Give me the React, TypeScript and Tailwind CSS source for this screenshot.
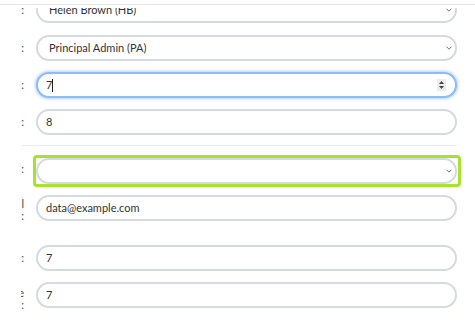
import React from "react";

const font = { fontFamily: "Lato, 'Open Sans', sans-serif" };

function Chevron() {
  return (
    <svg width="6" height="4" viewBox="0 0 6 4" className="shrink-0">
      <polyline points="0.5,0.7 3,3.2 5.5,0.7" fill="none" stroke="#6b7280" strokeWidth="1" />
    </svg>
  );
}

// Label column is clipped on the left; only its tail is visible
function Label({ lines, pt }: { lines: string[]; pt?: string }) {
  return (
    <div
      className={
        "w-[3px] h-[26px] shrink-0 flex justify-end overflow-x-clip text-[11px] leading-[12px] text-[#3f4652] " +
        (pt ?? "items-center")
      }
    >
      <span className="shrink-0 whitespace-nowrap text-right">
        {lines.map((l, i) => (
          <React.Fragment key={i}>
            {i > 0 && <br />}
            {l}
          </React.Fragment>
        ))}
      </span>
    </div>
  );
}

function Field({
  value,
  select,
  focus,
}: {
  value?: string;
  select?: boolean;
  focus?: boolean;
}) {
  return (
    <div
      className={
        "flex-1 h-[26px] rounded-full border-2 bg-white flex items-center text-[11px] text-[#333] " +
        (select ? "pl-[11px] pr-[3px] " : "pl-[8px] pr-[9px] ") +
        (focus
          ? "border-[#8dbdf6] shadow-[0_0_3px_1px_rgba(120,170,240,0.55)]"
          : "border-[#d5dae0]")
      }
    >
      <span className="flex-1 truncate">
        {value}
        {focus && <span className="inline-block w-[1px] h-[13px] bg-[#222] align-[-3px]" />}
      </span>
      {select && <Chevron />}
      {focus && (
        <div className="w-[9px] h-[12px] bg-[#ededed] flex flex-col items-center justify-center gap-[2px]">
          <svg width="5" height="3" viewBox="0 0 5 3">
            <polygon points="0,3 2.5,0 5,3" fill="#444" />
          </svg>
          <svg width="5" height="3" viewBox="0 0 5 3">
            <polygon points="0,0 5,0 2.5,3" fill="#444" />
          </svg>
        </div>
      )}
    </div>
  );
}

export default function App() {
  return (
    <div className="relative h-[335px] w-[475px] overflow-hidden bg-white" style={font}>
      {/* sticky header edge over the scrolled form */}
      <div className="absolute top-0 left-0 right-0 h-[8px] bg-white z-10 pt-[4px]">
        <div className="h-px bg-[#e4e6e9]" />
      </div>

      <div className="flex flex-col pl-[21px] pr-[18px] mt-[-3px]">
        <div className="flex items-start">
          <Label lines={[":"]} />
          <div className="ml-[12px] flex-1 flex">
            <Field value="Helen Brown (HB)" select />
          </div>
        </div>

        <div className="flex items-start mt-[12px]">
          <Label lines={[":"]} />
          <div className="ml-[12px] flex-1 flex">
            <Field value="Principal Admin (PA)" select />
          </div>
        </div>

        <div className="flex items-start mt-[11px]">
          <Label lines={[":"]} />
          <div className="ml-[12px] flex-1 flex">
            <Field value="7" focus />
          </div>
        </div>

        <div className="flex items-start mt-[11px]">
          <Label lines={[":"]} />
          <div className="ml-[12px] flex-1 flex">
            <Field value="8" />
          </div>
        </div>

        <div className="ml-[1px] mt-[10px] h-px bg-[#e8eaed]" />

        <div className="flex items-start mt-[9px]">
          <div className="mt-[1px]">
            <Label lines={[":"]} />
          </div>
          <div className="ml-[9px] mr-[-4px] pr-px flex-1 flex border-[3px] border-[#a7e22f] rounded-[4px]">
            <Field select />
          </div>
        </div>

        <div className="flex items-start mt-[8px]">
          <Label lines={["Email", ":"]} pt="items-start pt-[3px]" />
          <div className="ml-[12px] flex-1 flex">
            <Field value="data@example.com" />
          </div>
        </div>

        <div className="flex items-start mt-[24px]">
          <Label lines={[":"]} />
          <div className="ml-[12px] flex-1 flex">
            <Field value="7" />
          </div>
        </div>

        <div className="flex items-start mt-[11px]">
          <Label lines={["Grade", ":"]} pt="items-start pt-[5px]" />
          <div className="ml-[12px] flex-1 flex">
            <Field value="7" />
          </div>
        </div>
      </div>
    </div>
  );
}
